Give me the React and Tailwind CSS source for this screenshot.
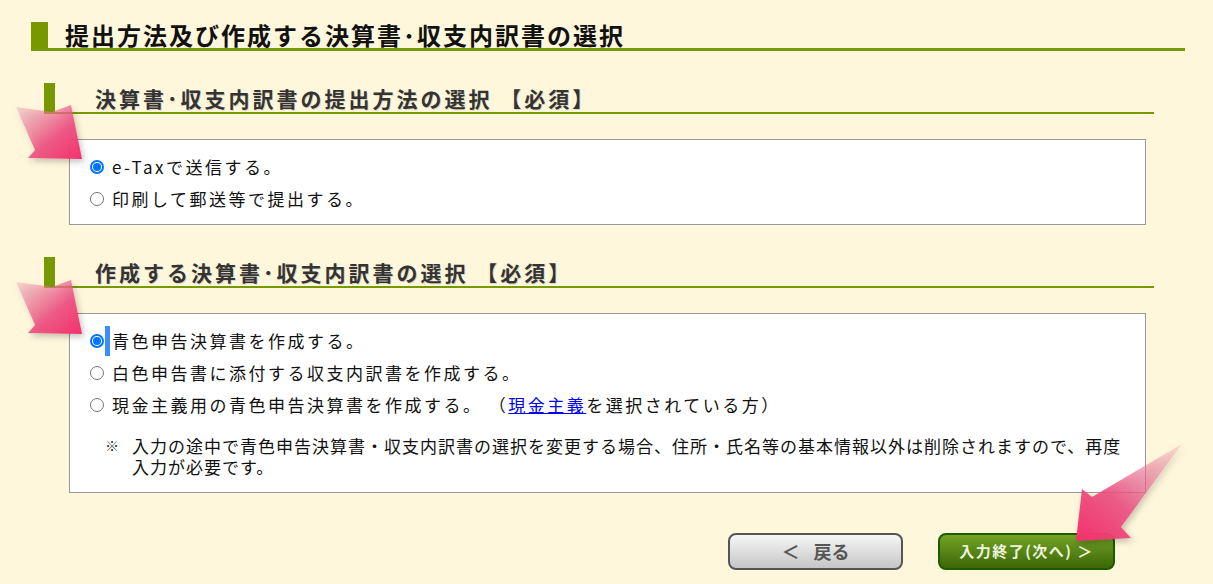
import React from 'react';

const jp = { fontFamily: '"Noto Sans CJK JP", "Noto Sans", sans-serif' };

const SectionHeader = ({ children }) => (
  <div className="ml-[44px] w-[1110px] h-[31px] border-l-[11px] border-b-2 border-[#779900] pl-[40px] flex items-center">
    <h2 className="text-[21px] font-bold tracking-[3px] text-[#333] leading-none pt-[2px]" style={{ textShadow: '1px 1px 0 rgba(0,0,0,0.15)' }}>
      {children}
    </h2>
  </div>
);

const Radio = ({ checked, children, caret }) => (
  <label className="relative flex items-center h-[32px] text-[17px] tracking-[2.5px] text-[#111]">
    {checked ? (
      <span className="w-[14px] h-[14px] rounded-full border-2 border-[#0075ff] flex items-center justify-center shrink-0">
        <span className="w-[8px] h-[8px] rounded-full bg-[#0075ff]" />
      </span>
    ) : (
      <span className="w-[14px] h-[14px] rounded-full border border-[#767676] bg-white shrink-0" />
    )}
    {caret && <span className="absolute left-[15px] top-[1px] w-[5px] h-[30px] bg-[#3a8eff]" />}
    <span className="ml-[8px]">{children}</span>
  </label>
);

const Arrows = () => (
  <svg className="absolute left-0 top-0 pointer-events-none" width="1213" height="584">
    <defs>
      <linearGradient id="g1" x1="0" y1="0" x2="1" y2="1">
        <stop offset="0" stopColor="#e9a0b2" stopOpacity="0.35" />
        <stop offset="0.6" stopColor="#ee4c7e" stopOpacity="0.9" />
        <stop offset="1" stopColor="#f4306c" />
      </linearGradient>
      <linearGradient id="g2" x1="1" y1="0" x2="0" y2="1">
        <stop offset="0" stopColor="#e9a0b2" stopOpacity="0.3" />
        <stop offset="0.6" stopColor="#ec4f80" stopOpacity="0.9" />
        <stop offset="1" stopColor="#f4306c" />
      </linearGradient>
      <filter id="sh" x="-30%" y="-30%" width="160%" height="160%">
        <feDropShadow dx="2" dy="3" stdDeviation="3" floodColor="#000" floodOpacity="0.25" />
      </filter>
    </defs>
    <polygon filter="url(#sh)" fill="url(#g1)" points="16,107 52,112 71,105 82,159 28,158 35,150" />
    <polygon filter="url(#sh)" fill="url(#g1)" points="16,282 52,287 71,280 82,334 28,333 35,325" />
    <polygon filter="url(#sh)" fill="url(#g2)" points="1182,444 1092,497 1082,489 1076,541 1131,538 1121,527" />
  </svg>
);

const App = () => {
  return (
    <div className="relative w-[1213px] h-[584px] overflow-hidden bg-[#fff7dc]" style={jp}>
      <div className="pt-[22px]">
        <div className="ml-[31px] w-[1154px] h-[29px] border-l-[17px] border-b-[3px] border-[#779900] pl-[17px] flex items-center">
          <h1 className="text-[24px] font-bold tracking-[2px] text-[#111] leading-none">
            提出方法及び作成する決算書･収支内訳書の選択
          </h1>
        </div>

        <div className="mt-[32px]">
          <SectionHeader>決算書･収支内訳書の提出方法の選択 【必須】</SectionHeader>
        </div>
        <div className="ml-[69px] mt-[25px] w-[1077px] h-[86px] bg-white border border-[#999] pl-[20px] pt-[11px]">
          <Radio checked>e-Taxで送信する。</Radio>
          <Radio>印刷して郵送等で提出する。</Radio>
        </div>

        <div className="mt-[32px]">
          <SectionHeader>作成する決算書･収支内訳書の選択 【必須】</SectionHeader>
        </div>
        <div className="ml-[69px] mt-[25px] w-[1077px] h-[180px] bg-white border border-[#999] pl-[20px] pt-[11px]">
          <Radio checked caret>青色申告決算書を作成する。</Radio>
          <Radio>白色申告書に添付する収支内訳書を作成する。</Radio>
          <Radio>
            現金主義用の青色申告決算書を作成する。 （<a href="#" className="text-[#0000ee] underline">現金主義</a>を選択されている方）
          </Radio>
          <div className="flex mt-[14px] text-[17px] tracking-[1px] leading-[21px] text-[#111]">
            <span className="ml-[15px] w-[27px] shrink-0 text-[14px] text-[#333]">※</span>
            <div className="whitespace-nowrap">
              <div>入力の途中で青色申告決算書・収支内訳書の選択を変更する場合、住所・氏名等の基本情報以外は削除されますので、再度</div>
              <div>入力が必要です。</div>
            </div>
          </div>
        </div>

        <div className="flex ml-[728px] mt-[40px] gap-[35px]">
          <button className="w-[175px] h-[37px] rounded-[8px] border-2 border-[#555] bg-gradient-to-b from-[#f6f6f6] to-[#c6c6c6] text-[#555] text-[18px] font-bold flex items-center justify-center gap-[14px]">
            <span>＜</span>
            <span>戻る</span>
          </button>
          <button className="w-[177px] h-[37px] rounded-[8px] border-2 border-[#1e5a00] bg-gradient-to-b from-[#74a426] to-[#3b6806] text-[#eef4dc] text-[15px] font-bold tracking-[1.5px] flex items-center justify-center">
            入力終了(次へ) ＞
          </button>
        </div>
      </div>
      <Arrows />
    </div>
  );
};

export default App;
